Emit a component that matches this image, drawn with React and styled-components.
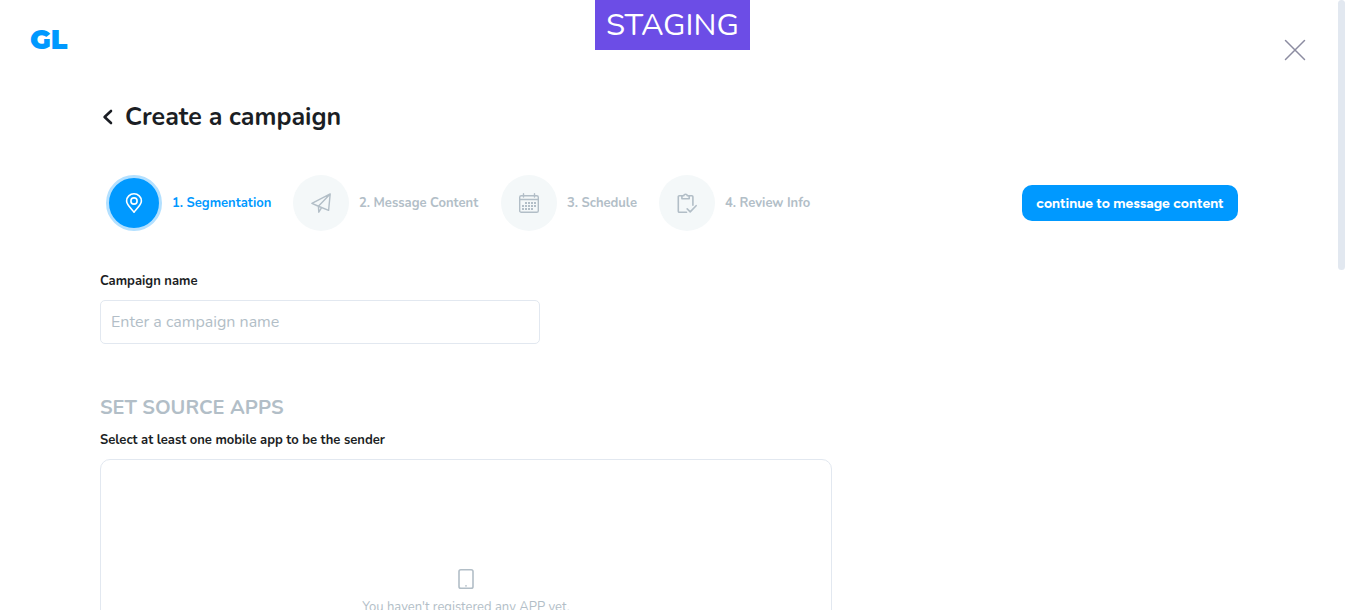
import React from "react";
import styled, { createGlobalStyle, css } from "styled-components";

const colors = {
  primary: "#0099ff",
  halo: "#b3e0ff",
  text: "#1b1e24",
  muted: "#b2bec7",
  soft: "#f4f8f9",
  line: "#e2e8f0",
  staging: "#6c4de6",
  close: "#8c8ca1",
};

const GlobalStyle = createGlobalStyle`
  *, *::before, *::after { box-sizing: border-box; }
  body {
    margin: 0;
    background: #fff;
    color: ${colors.text};
    font-family: Nunito, Lato, "Open Sans", sans-serif;
  }
  h1, h2, p, ol { margin: 0; padding: 0; }
  button, input { font-family: inherit; }
`;

const Page = styled.div`
  position: relative;
  height: 100vh;
  overflow: hidden;
  padding-right: 7px;
`;

const ScrollThumb = styled.div`
  position: absolute;
  top: 0;
  right: 0;
  width: 7px;
  height: 270px;
  border-radius: 4px;
  background: ${colors.line};
`;

const StagingBanner = styled.div`
  position: absolute;
  top: 0;
  left: 0;
  right: 0;
  display: flex;
  justify-content: center;
  pointer-events: none;
`;

const StagingBadge = styled.div`
  width: 155px;
  line-height: 50px;
  text-align: center;
  color: #fff;
  background: ${colors.staging};
  font-size: 31px;
`;

const Header = styled.header`
  display: flex;
  align-items: flex-start;
  justify-content: space-between;
  height: 100px;
  padding: 24px 32px 0 30px;
`;

const Logo = styled.a`
  color: ${colors.primary};
  font-family: Montserrat, Inter, sans-serif;
  font-size: 27px;
  line-height: 32px;
  font-weight: 900;
  text-decoration: none;
`;

const IconButton = styled.button`
  display: flex;
  padding: 0;
  border: 0;
  background: none;
  color: inherit;
  cursor: pointer;
`;

const CloseButton = styled(IconButton)`
  margin-top: 15px;
  color: ${colors.close};
`;

const Main = styled.main`
  padding: 0 100px;
`;

const TitleRow = styled.div`
  display: flex;
  align-items: center;
  gap: 9px;
  height: 34px;
`;

const Title = styled.h1`
  font-size: 25px;
  line-height: 34px;
  font-weight: 700;
`;

const StepBar = styled.div`
  display: flex;
  align-items: center;
  justify-content: space-between;
  margin-top: 41px;
  padding-left: 6px;
`;

const Steps = styled.ol`
  display: grid;
  grid-template-columns: 187px 208px 158px auto;
  list-style: none;
`;

const Step = styled.li`
  display: flex;
  align-items: center;
  gap: 10px;
  color: ${(p) => (p.$active ? colors.primary : colors.muted)};
  font-size: 13px;
  font-weight: 700;
  white-space: nowrap;
`;

const StepCircle = styled.span`
  display: flex;
  align-items: center;
  justify-content: center;
  width: 56px;
  height: 56px;
  border-radius: 50%;
  background: ${colors.soft};
  ${(p) =>
    p.$active &&
    css`
      color: #fff;
      background: ${colors.primary};
      border: 3px solid ${colors.halo};
    `}
`;

const PrimaryButton = styled.button`
  height: 36px;
  padding: 0;
  width: 216px;
  border: 0;
  border-radius: 10px;
  background: ${colors.primary};
  color: #fff;
  font-family: Figtree, Lato, sans-serif;
  font-size: 14px;
  font-weight: 700;
  cursor: pointer;
`;

const Field = styled.div`
  display: flex;
  flex-direction: column;
  gap: 10px;
  margin-top: 41px;
`;

const Label = styled.label`
  font-size: 13px;
  line-height: 18px;
  font-weight: 700;
`;

const TextInput = styled.input`
  width: 440px;
  max-width: 100%;
  height: 44px;
  padding: 0 10px;
  border: 1px solid ${colors.line};
  border-radius: 5px;
  font-size: 16px;
  color: ${colors.text};
  outline: none;
  &::placeholder { color: ${colors.muted}; opacity: 1; }
`;

const SectionTitle = styled.h2`
  margin-top: 50px;
  color: ${colors.muted};
  font-size: 20px;
  line-height: 28px;
  font-weight: 700;
  text-transform: uppercase;
`;

const SectionHint = styled.p`
  margin-top: 9px;
  font-size: 13px;
  line-height: 18px;
  font-weight: 700;
`;

const AppsPanel = styled.section`
  display: flex;
  flex-direction: column;
  align-items: center;
  gap: 8px;
  width: 732px;
  max-width: 100%;
  margin-top: 10px;
  padding: 108px 20px;
  border: 1px solid ${colors.line};
  border-radius: 10px;
  color: ${colors.muted};
  font-size: 13px;
  line-height: 18px;
`;

const Icon = ({ size = 20, w = size, stroke = 1.6, children }) => (
  <svg
    width={w}
    height={size}
    viewBox={`0 0 ${w} ${size}`}
    fill="none"
    stroke="currentColor"
    strokeWidth={stroke}
    strokeLinecap="round"
    strokeLinejoin="round"
    aria-hidden="true"
  >
    {children}
  </svg>
);

const PinIcon = () => (
  <Icon>
    <path d="M10 19.2C8 16.4 2.6 11.8 2.6 8a7.4 7.2 0 0 1 14.8 0c0 3.8-5.4 8.4-7.4 11.2Z" />
    <circle cx="10" cy="8" r="3.1" />
  </Icon>
);

const PlaneIcon = () => (
  <Icon stroke={1.4}>
    <path d="M19.2.9.9 10.4l6 2.6L17.6 17.4 19.2.9ZM19.2.9 7.4 13.2l.4 6 2.8-4.6M19.2.9 7.4 13.2" />
  </Icon>
);

const dotRows = [
  { y: 10, xs: [6.8, 9.8, 12.8, 15.8] },
  { y: 13, xs: [3.8, 6.8, 9.8, 12.8, 15.8] },
  { y: 16, xs: [3.8, 6.8, 9.8, 12.8] },
];

const CalendarIcon = () => (
  <Icon stroke={1.4}>
    <rect x=".7" y="2.7" width="18.6" height="16.6" rx="1.6" />
    <path d="M.7 6.5h18.6M4.5.7v3.4M15.5.7v3.4" />
    {dotRows.map(({ y, xs }) =>
      xs.map((x) => (
        <rect key={`${x}-${y}`} x={x - 0.8} y={y - 1} width="2" height="2" fill="currentColor" stroke="none" />
      ))
    )}
  </Icon>
);

const ClipboardIcon = () => (
  <Icon stroke={1.6}>
    <path d="M5 2.7H2.3a1 1 0 0 0-1 1v14.6a1 1 0 0 0 1 1h7.2M12 2.7h2.9a1 1 0 0 1 1 1v8.6" />
    <path d="M4.9 2.7h1.8a1.9 1.9 0 0 1 3.7 0h1.8v3H4.9Z" />
    <path d="m10.2 15.9 3 3 5.9-6.2" />
  </Icon>
);

const steps = [
  { label: "1. Segmentation", icon: PinIcon, active: true },
  { label: "2. Message Content", icon: PlaneIcon },
  { label: "3. Schedule", icon: CalendarIcon },
  { label: "4. Review Info", icon: ClipboardIcon },
];

export default function App() {
  return (
    <Page>
      <GlobalStyle />
      <Header>
        <Logo href="#">GL</Logo>
        <CloseButton type="button" aria-label="Close">
          <Icon size={22} stroke={1.5}>
            <path d="m1.5 1.5 19 19M20.5 1.5l-19 19" />
          </Icon>
        </CloseButton>
      </Header>
      <Main>
        <TitleRow>
          <IconButton type="button" aria-label="Back">
            <Icon size={16} stroke={2.6}>
              <path d="M11 2 4.6 8l6.4 6" />
            </Icon>
          </IconButton>
          <Title>Create a campaign</Title>
        </TitleRow>
        <StepBar>
          <Steps>
            {steps.map(({ label, icon: StepIcon, active }) => (
              <Step key={label} $active={active} aria-current={active ? "step" : undefined}>
                <StepCircle $active={active}>
                  <StepIcon />
                </StepCircle>
                {label}
              </Step>
            ))}
          </Steps>
          <PrimaryButton type="button">continue to message content</PrimaryButton>
        </StepBar>
        <Field>
          <Label htmlFor="campaign-name">Campaign name</Label>
          <TextInput id="campaign-name" type="text" placeholder="Enter a campaign name" />
        </Field>
        <SectionTitle>Set source apps</SectionTitle>
        <SectionHint>Select at least one mobile app to be the sender</SectionHint>
        <AppsPanel>
          <Icon size={22} w={16}>
            <rect x="1" y="1.7" width="14" height="18.6" rx="1.8" />
            <path d="M8 17.7v.3" />
          </Icon>
          <p>You haven't registered any APP yet.</p>
        </AppsPanel>
      </Main>
      <StagingBanner>
        <StagingBadge>STAGING</StagingBadge>
      </StagingBanner>
      <ScrollThumb />
    </Page>
  );
}
